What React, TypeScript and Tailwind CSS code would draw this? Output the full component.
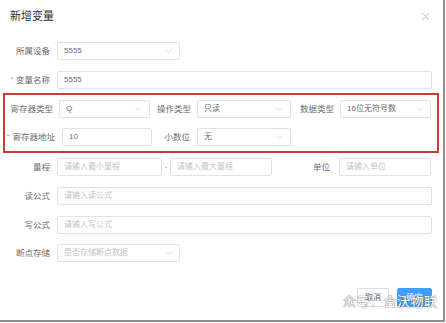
import type { ReactNode } from "react";

const FONT = "font-['Liberation_Sans','Noto_Sans_CJK_SC',sans-serif]";

function Label({ w, required, children }: { w: string; required?: boolean; children: ReactNode }) {
  return (
    <div className={`${w} shrink-0 text-right text-[8.5px] leading-none text-[#6b6d72] whitespace-nowrap`}>
      {required && <span className="text-[#f08080] mr-[3px] text-[7px] align-top">*</span>}
      {children}
    </div>
  );
}

function Chevron() {
  return (
    <svg width="7" height="4" viewBox="0 0 7 4" className="shrink-0">
      <path d="M0.5 0.5 L3.5 3.5 L6.5 0.5" fill="none" stroke="#ccced3" strokeWidth="0.7" />
    </svg>
  );
}

function Select({ w, value, placeholder }: { w: string; value?: string; placeholder?: string }) {
  return (
    <div
      className={`${w} h-[18px] shrink-0 border border-[#e0e2e8] rounded-[2px] bg-white flex items-center justify-between pl-[6px] pr-[7px]`}
    >
      <span className={`text-[8px] leading-none ${value ? "text-[#6b6d72]" : "text-[#c0c4cc]"}`}>
        {value ?? placeholder}
      </span>
      <Chevron />
    </div>
  );
}

function Input({ w, value, placeholder }: { w: string; value?: string; placeholder?: string }) {
  return (
    <div className={`${w} h-[18px] shrink-0 border border-[#e0e2e8] rounded-[2px] bg-white flex items-center pl-[6px]`}>
      <span className={`text-[8px] leading-none ${value ? "text-[#6b6d72]" : "text-[#c0c4cc]"}`}>
        {value ?? placeholder}
      </span>
    </div>
  );
}

export default function App() {
  return (
    <div className={`w-[446px] h-[323px] bg-white overflow-hidden relative ${FONT}`}>
      <div className="w-[445px] h-[322px] bg-white border-r-2 border-b-2 border-[#8e8e8e] flex flex-col">
        {/* header */}
        <div className="h-[42px] shrink-0 flex justify-between pl-[10px] pr-[14px] pt-[11px]">
          <div className="text-[11px] leading-none text-[#303133]">新增变量</div>
          <svg width="7" height="7" viewBox="0 0 7 7" className="mt-[2px]">
            <path d="M0.5 0.5 L6.5 6.5 M6.5 0.5 L0.5 6.5" stroke="#b0b3b8" strokeWidth="0.9" />
          </svg>
        </div>

        {/* 所属设备 */}
        <div className="flex items-center">
          <Label w="w-[50px]">所属设备</Label>
          <div className="ml-[7px]">
            <Select w="w-[123px]" value="5555" />
          </div>
        </div>

        {/* 变量名称 */}
        <div className="flex items-center mt-[11px]">
          <Label w="w-[50px]" required>变量名称</Label>
          <div className="ml-[7px]">
            <Input w="w-[375px]" value="5555" />
          </div>
        </div>

        {/* highlighted block */}
        <div className="ml-[3px] mt-[4px] w-[436px] border-2 border-[#c43d39] py-[5px] flex flex-col gap-[10px]">
          <div className="flex items-center">
            <Label w="w-[48px]">寄存器类型</Label>
            <div className="ml-[6px]">
              <Select w="w-[91px]" value="Q" />
            </div>
            <Label w="w-[41px]">操作类型</Label>
            <div className="ml-[6px]">
              <Select w="w-[94px]" value="只读" />
            </div>
            <Label w="w-[43px]">数据类型</Label>
            <div className="ml-[6px]">
              <Select w="w-[91px]" value="16位无符号数" />
            </div>
          </div>
          <div className="flex items-center">
            <Label w="w-[50px]" required>寄存器地址</Label>
            <div className="ml-[7px]">
              <Input w="w-[90px]" value="10" />
            </div>
            <Label w="w-[38px]">小数位</Label>
            <div className="ml-[7px]">
              <Select w="w-[94px]" value="无" />
            </div>
          </div>
        </div>

        {/* 量程 */}
        <div className="flex items-center mt-[5px]">
          <Label w="w-[50px]">量程</Label>
          <div className="ml-[7px]">
            <Input w="w-[105px]" placeholder="请输入最小量程" />
          </div>
          <div className="w-[8px] text-center text-[8px] text-[#909399]">-</div>
          <Input w="w-[102px]" placeholder="请输入最大量程" />
          <Label w="w-[58px]">单位</Label>
          <div className="ml-[9px]">
            <Input w="w-[92px]" placeholder="请输入单位" />
          </div>
        </div>

        {/* 读公式 */}
        <div className="flex items-center mt-[11px]">
          <Label w="w-[50px]">读公式</Label>
          <div className="ml-[7px]">
            <Input w="w-[375px]" placeholder="请输入读公式" />
          </div>
        </div>

        {/* 写公式 */}
        <div className="flex items-center mt-[11px]">
          <Label w="w-[50px]">写公式</Label>
          <div className="ml-[7px]">
            <Input w="w-[375px]" placeholder="请输入写公式" />
          </div>
        </div>

        {/* 断点存储 */}
        <div className="flex items-center mt-[10px]">
          <Label w="w-[50px]">断点存储</Label>
          <div className="ml-[7px]">
            <Select w="w-[123px]" placeholder="是否存储断点数据" />
          </div>
        </div>

        {/* footer */}
        <div className="flex justify-end gap-[8px] pr-[11px] mt-[26px]">
          <button className="w-[32px] h-[19px] border border-[#dcdfe6] rounded-[2px] bg-white text-[8px] text-[#606266]">
            取消
          </button>
          <button className="w-[35px] h-[19px] border border-[#409eff] rounded-[2px] bg-[#409eff] text-[8px] text-white">
            确定
          </button>
        </div>
      </div>

      {/* watermark */}
      <div className="absolute left-[343px] top-[295px] text-[13px] leading-none text-white tracking-[0.5px] [text-shadow:0_0_1px_#666,0_0_1px_#666]">
        众号：合沃物联
      </div>
    </div>
  );
}
